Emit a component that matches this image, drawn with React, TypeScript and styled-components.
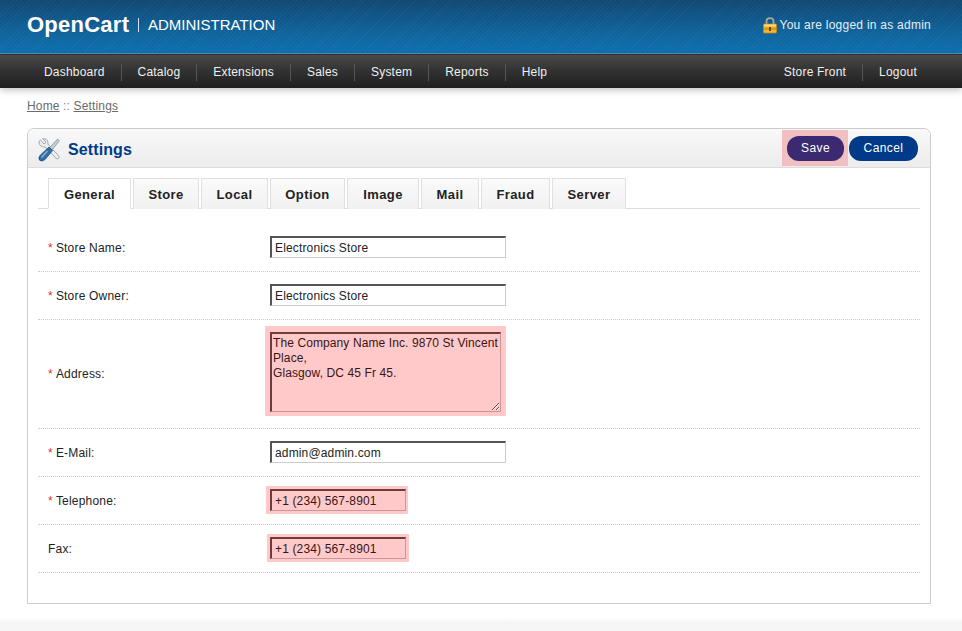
import * as React from 'react'
import styled, { createGlobalStyle } from 'styled-components'

const tabs = ['General', 'Store', 'Local', 'Option', 'Image', 'Mail', 'Fraud', 'Server']
const tabWidths = [83, 66, 67, 75, 72, 58, 69, 74]
const mainMenu = ['Dashboard', 'Catalog', 'Extensions', 'Sales', 'System', 'Reports', 'Help']

const GlobalStyle = createGlobalStyle`
  html, body {
    margin: 0;
    padding: 0;
    background: #fff;
    overflow: hidden;
  }
  body {
    font-family: "Liberation Sans", Arial, sans-serif;
    font-size: 12px;
    color: #222;
  }
`

const Page = styled.div`
  width: 962px;
  height: 631px;
  overflow: hidden;
  background: linear-gradient(to bottom, #fff 0, #fff 618px, #f6f6f6 622px);
`

const Header = styled.header`
  height: 54px;
  box-sizing: border-box;
  padding: 0 31px 3px 27px;
  display: flex;
  align-items: center;
  justify-content: space-between;
  background:
    repeating-linear-gradient(135deg, rgba(255, 255, 255, 0.025) 0 1px, rgba(0, 0, 0, 0.025) 1px 3px),
    linear-gradient(to bottom, #114a75 0%, #10629b 55%, #0f73b2 100%);
  border-bottom: 1px solid #5b94bd;
`

const Brand = styled.div`
  display: flex;
  align-items: center;
  color: #fff;
`

const Logo = styled.span`
  font-size: 22px;
  font-weight: bold;
  letter-spacing: 0.25px;
  width: 111px;
`

const AdminLabel = styled.span`
  font-size: 15px;
  line-height: 14px;
  padding-left: 9px;
  border-left: 1px solid #cfe2ef;
`

const LoggedIn = styled.div`
  display: flex;
  align-items: center;
  gap: 3px;
  color: #e6eff5;
  letter-spacing: 0.25px;
`

const Nav = styled.nav`
  height: 34px;
  box-sizing: border-box;
  padding: 1px 29px 0 28px;
  display: flex;
  align-items: center;
  justify-content: space-between;
  border-top: 1px solid #2e2e2e;
  background: linear-gradient(to bottom, #4a4a4a 0%, #333 45%, #1f1f1f 100%);
  box-shadow: 0 2px 7px rgba(0, 0, 0, 0.25);
`

const NavGroup = styled.div`
  display: flex;
  align-items: center;
`

const NavItem = styled.a`
  padding: 0 16px;
  line-height: 17px;
  color: #f0f0f0;
  letter-spacing: 0.2px;
  border-left: 1px solid #555;
  &:first-child {
    border-left: 0;
  }
`

const Breadcrumb = styled.div`
  padding: 11px 27px 14px;
  height: 15px;
  line-height: 15px;
  color: #888;
  letter-spacing: 0.15px;
`

const CrumbLink = styled.a`
  color: #6b6b6b;
  text-decoration: underline;
`

const Box = styled.section`
  width: 904px;
  height: 476px;
  box-sizing: border-box;
  margin-left: 27px;
  border: 1px solid #ccc;
  border-radius: 7px 7px 0 0;
  background: #fff;
`

const Heading = styled.div`
  height: 39px;
  box-sizing: border-box;
  padding: 0 12px 0 10px;
  display: flex;
  align-items: center;
  justify-content: space-between;
  border-bottom: 1px solid #ddd;
  border-radius: 7px 7px 0 0;
  background: linear-gradient(to bottom, #f9f9f9, #ececec);
`

const Title = styled.h1`
  margin: 0;
  padding-top: 4px;
  display: flex;
  align-items: center;
  gap: 8px;
  font-size: 16px;
  color: #003a88;
  letter-spacing: 0.1px;
`

const Buttons = styled.div`
  display: flex;
  align-items: center;
  height: 36px;
`

const ButtonHighlight = styled.div`
  padding: 6px 4px 5px 5px;
  margin-right: 1px;
  background: #f2bfc1;
`

const Button = styled.a<{ $tone: string; $width: number }>`
  display: block;
  box-sizing: border-box;
  width: ${(p) => p.$width}px;
  height: 25px;
  line-height: 25px;
  text-align: center;
  border-radius: 12px;
  color: #fff;
  letter-spacing: 0.4px;
  background: ${(p) => p.$tone};
`

const Content = styled.div`
  padding: 10px 10px 0;
`

const TabBar = styled.div`
  display: flex;
  height: 31px;
  box-sizing: border-box;
  padding-left: 10px;
  gap: 2px;
  border-bottom: 1px solid #ddd;
`

const Tab = styled.a<{ $active?: boolean; $width: number }>`
  display: block;
  box-sizing: border-box;
  width: ${(p) => p.$width}px;
  height: 31px;
  line-height: 31px;
  text-align: center;
  font-size: 13px;
  font-weight: bold;
  letter-spacing: 0.4px;
  color: #222;
  border: 1px solid #e0e0e0;
  border-bottom: ${(p) => (p.$active ? '1px solid #fff' : '0')};
  background: ${(p) => (p.$active ? '#fff' : 'linear-gradient(to bottom, #fafafa, #f1f1f1)')};
`

const Form = styled.div`
  margin-top: 15px;
`

const Row = styled.div<{ $height: number }>`
  height: ${(p) => p.$height}px;
  box-sizing: border-box;
  display: grid;
  grid-template-columns: 222px 1fr;
  align-items: center;
  padding-left: 10px;
  border-bottom: 1px dotted #ccc;
`

const Label = styled.label`
  letter-spacing: 0.2px;
  color: #222;
`

const Required = styled.span`
  color: #e03030;
  margin-right: 3px;
`

const fieldBase = `
  display: block;
  box-sizing: border-box;
  outline: 0;
  font-family: "Liberation Sans", Arial, sans-serif;
  font-size: 12px;
  border-style: solid;
  border-width: 2px 1px 1px 2px;
`

const Input = styled.input<{ $halo?: string; $width: number }>`
  ${fieldBase}
  letter-spacing: 0.15px;
  padding: 1px 3px;
  margin-bottom: 1px;
  width: ${(p) => p.$width}px;
  height: 22px;
  color: ${(p) => (p.$halo ? '#3a1515' : '#222')};
  background: ${(p) => (p.$halo ? '#ffc9c9' : '#fff')};
  border-color: ${(p) => (p.$halo ? '#6f3b3b #cc9696 #cc9696 #6f3b3b' : '#555 #ccc #ccc #555')};
  box-shadow: ${(p) => (p.$halo ? `${p.$halo} #ffc9c9` : 'none')};
`

const TextArea = styled.textarea`
  ${fieldBase}
  letter-spacing: 0.1px;
  width: 231px;
  height: 80px;
  padding: 2px 0 1px 1px;
  line-height: 15px;
  color: #3a1515;
  background: #ffc9c9;
  border-color: #6f3b3b #cc9696 #cc9696 #6f3b3b;
  box-shadow: 0 -1px 0 5px #ffc9c9;
  margin-bottom: 4px;
`

const ToolsIcon = () => (
  <svg width="22" height="24" viewBox="0 0 22 24">
    <path d="M2.5 2 L6 6 L8 4.2 L4.6 0.8 Q9.5 0.2 10 4.5 L9.8 6 L20.8 18 Q21.8 21.2 18.3 20.6 L7 9 L4.4 8.8 Q0.4 7.2 1.2 3.2 Z" fill="#eceff2" stroke="#8b939b" strokeWidth="0.8" />
    <path d="M19.6 1 L21.4 2.8 L14 12 L11.6 9.6 Z" fill="#c3ccd5" stroke="#6d7a88" strokeWidth="0.6" />
    <path d="M11 9 L14.6 12.6 L7 21.6 Q3.8 24.2 1.6 22.2 Q-0.2 19.8 2.4 17 Z" fill="#2f6ea8" stroke="#1c4468" strokeWidth="0.7" />
    <path d="M3.5 19.5 L9.5 13" stroke="#8fbce0" strokeWidth="1.2" fill="none" />
  </svg>
)

const LockIcon = () => (
  <svg width="14" height="17" viewBox="0 0 14 17">
    <path d="M3.5 8 V4.5 Q3.5 1.2 7 1.2 Q10.5 1.2 10.5 4.5 V8" fill="none" stroke="#a9a9a0" strokeWidth="1.8" />
    <rect x="0.5" y="7" width="13" height="9" rx="1" fill="#f3b72c" stroke="#c98a12" strokeWidth="0.8" />
    <rect x="1" y="7.5" width="12" height="2" fill="#fbdc77" />
    <rect x="1" y="10.5" width="12" height="2.5" fill="#d9971c" />
    <rect x="6" y="10" width="2" height="4" fill="#6e4507" />
  </svg>
)

const App: React.FC = () => {
  return (
    <Page>
      <GlobalStyle />
      <Header>
        <Brand>
          <Logo>OpenCart</Logo>
          <AdminLabel>ADMINISTRATION</AdminLabel>
        </Brand>
        <LoggedIn>
          <LockIcon />
          You are logged in as admin
        </LoggedIn>
      </Header>
      <Nav>
        <NavGroup>
          {mainMenu.map((item) => (
            <NavItem key={item}>{item}</NavItem>
          ))}
        </NavGroup>
        <NavGroup>
          <NavItem>Store Front</NavItem>
          <NavItem>Logout</NavItem>
        </NavGroup>
      </Nav>
      <Breadcrumb>
        <CrumbLink>Home</CrumbLink> :: <CrumbLink>Settings</CrumbLink>
      </Breadcrumb>
      <Box>
        <Heading>
          <Title>
            <ToolsIcon />
            Settings
          </Title>
          <Buttons>
            <ButtonHighlight>
              <Button $tone="#3b2a72" $width={57}>Save</Button>
            </ButtonHighlight>
            <Button $tone="#003a88" $width={69}>Cancel</Button>
          </Buttons>
        </Heading>
        <Content>
          <TabBar>
            {tabs.map((tab, i) => (
              <Tab key={tab} $active={i === 0} $width={tabWidths[i]}>
                {tab}
              </Tab>
            ))}
          </TabBar>
          <Form>
            <Row $height={48}>
              <Label><Required>*</Required>Store Name:</Label>
              <Input $width={236} defaultValue="Electronics Store" />
            </Row>
            <Row $height={48}>
              <Label><Required>*</Required>Store Owner:</Label>
              <Input $width={236} defaultValue="Electronics Store" />
            </Row>
            <Row $height={109}>
              <Label><Required>*</Required>Address:</Label>
              <TextArea defaultValue={'The Company Name Inc. 9870 St Vincent Place,\nGlasgow, DC 45 Fr 45.'} />
            </Row>
            <Row $height={48}>
              <Label><Required>*</Required>E-Mail:</Label>
              <Input $width={236} defaultValue="admin@admin.com" />
            </Row>
            <Row $height={48}>
              <Label><Required>*</Required>Telephone:</Label>
              <Input $width={136} $halo="-1px 0 0 3px" defaultValue="+1 (234) 567-8901" />
            </Row>
            <Row $height={48}>
              <Label>Fax:</Label>
              <Input $width={136} $halo="0 0 0 3px" defaultValue="+1 (234) 567-8901" />
            </Row>
          </Form>
        </Content>
      </Box>
    </Page>
  )
}

export default App
